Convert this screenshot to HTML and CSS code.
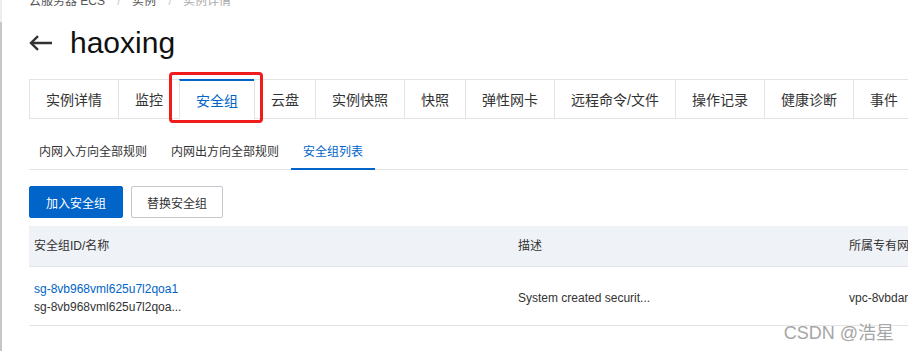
FILE: index.html
```html
<!DOCTYPE html>
<html lang="zh-CN">
<head>
<meta charset="utf-8">
<title>haoxing</title>
<link rel="stylesheet" href="styles.css">
</head>
<body>
<div class="page">
  <div class="rail"></div>
  <main class="main">
    <nav class="crumbs">
      <span class="crumb">云服务器 ECS</span>
      <span class="sep">/</span>
      <span class="crumb">实例</span>
      <span class="sep">/</span>
      <span class="crumb current">实例详情</span>
    </nav>

    <header class="title-row">
      <svg class="back" width="24" height="16" viewBox="0 0 24 16" aria-hidden="true">
        <path d="M2 8 H23 M9 1.2 L2 8 L9 14.8" fill="none" stroke="#333" stroke-width="2.4" stroke-linecap="butt" stroke-linejoin="miter"/>
      </svg>
      <h1 class="title">haoxing</h1>
    </header>

    <div class="tabs">
      <div class="tab">实例详情</div>
      <div class="tab">监控</div>
      <div class="tab active">安全组</div>
      <div class="tab">云盘</div>
      <div class="tab">实例快照</div>
      <div class="tab">快照</div>
      <div class="tab">弹性网卡</div>
      <div class="tab">远程命令/文件</div>
      <div class="tab">操作记录</div>
      <div class="tab">健康诊断</div>
      <div class="tab">事件</div>
      <div class="tab">标签</div>
      <div class="highlight"></div>
    </div>

    <div class="subtabs">
      <div class="subtab first">内网入方向全部规则</div>
      <div class="subtab">内网出方向全部规则</div>
      <div class="subtab active">安全组列表</div>
    </div>

    <div class="actions">
      <button class="btn primary">加入安全组</button>
      <button class="btn">替换安全组</button>
    </div>

    <div class="table">
      <div class="thead">
        <div class="cell">安全组ID/名称</div>
        <div class="cell">描述</div>
        <div class="cell">所属专有网络</div>
      </div>
      <div class="trow">
        <div class="cell stack">
          <a class="link">sg-8vb968vml625u7l2qoa1</a>
          <span>sg-8vb968vml625u7l2qoa...</span>
        </div>
        <div class="cell">System created securit...</div>
        <div class="cell">vpc-8vbdamhk2dz9k1w0n</div>
      </div>
    </div>
  </main>
</div>
<div class="watermark">CSDN @浩星</div>
</body>
</html>
```

FILE: styles.css
```css
html, body {
  margin: 0;
  padding: 0;
  overflow: hidden;
  background: #fff;
}

body {
  font-family: "Liberation Sans", "Noto Sans CJK SC", sans-serif;
  color: #333;
  width: 908px;
  height: 351px;
  position: relative;
}

.page {
  display: flex;
  height: 351px;
}

.rail {
  flex: 0 0 2px;
  background: linear-gradient(to bottom, #ededed 0, #ededed 22px, #c6c6c6 22px, #c6c6c6 100%);
}

.main {
  flex: 1 1 auto;
  min-width: 0;
  padding-left: 27px;
}

/* breadcrumb */
.crumbs {
  margin-top: -8px;
  height: 18px;
  line-height: 18px;
  font-size: 12px;
  white-space: nowrap;
  color: #555;
}
.sep {
  color: #c8c8c8;
  margin: 0 8px 0 9px;
}
.crumb.current {
  color: #aaa;
}

/* title */
.title-row {
  margin-top: 12px;
  height: 40px;
  display: flex;
  align-items: center;
  gap: 17px;
}
.back {
  display: block;
  margin-top: 1px;
}
.title {
  margin: 0;
  font-size: 30px;
  font-weight: normal;
  line-height: 40px;
  color: #111;
  position: relative;
  top: 1px;
}

/* main tabs */
.tabs {
  margin-top: 17px;
  display: flex;
  position: relative;
  white-space: nowrap;
}
.tab {
  flex: 0 0 auto;
  box-sizing: border-box;
  height: 40px;
  padding: 0 16px;
  display: flex;
  align-items: center;
  font-size: 14px;
  border: 1px solid #e3e3e3;
  border-right: none;
  color: #333;
}
.tab.active {
  color: #0064c8;
  border-top: 2px solid #0064c8;
  border-bottom-color: #fff;
  padding-top: 0;
}
.highlight {
  position: absolute;
  left: 140px;
  top: -7px;
  width: 94px;
  height: 51px;
  box-sizing: border-box;
  border: 3px solid #f01c1c;
  border-radius: 4px;
}

/* sub tabs */
.subtabs {
  margin-top: 16px;
  display: flex;
  border-bottom: 1px solid #e3e3e3;
}
.subtab {
  height: 34px;
  line-height: 34px;
  padding: 0 12px;
  font-size: 12px;
  color: #333;
  position: relative;
  white-space: nowrap;
}
.subtab.first {
  padding-left: 10px;
}
.subtab.active {
  color: #0064c8;
}
.subtab.active::after {
  content: "";
  position: absolute;
  left: 0;
  right: 0;
  bottom: -1px;
  height: 2px;
  background: #0064c8;
}

/* buttons */
.actions {
  margin-top: 16px;
  display: flex;
  gap: 8px;
}
.btn {
  box-sizing: border-box;
  height: 32px;
  padding: 0 15px;
  font-family: inherit;
  font-size: 12px;
  border-radius: 2px;
  border: 1px solid #c4c6cc;
  background: #fff;
  color: #333;
}
.btn.primary {
  background: #0064c8;
  border-color: #0064c8;
  color: #fff;
  padding: 0 16px;
}

/* table */
.table {
  margin-top: 8px;
  width: 1100px;
  font-size: 12px;
}
.thead, .trow {
  display: grid;
  grid-template-columns: 484px 331px 285px;
  border-bottom: 1px solid #e3e3e3;
}
.thead {
  background: #eff2f6;
  height: 40px;
  align-items: center;
  color: #333;
}
.trow {
  box-sizing: border-box;
  height: 59px;
  padding: 13px 0 9px;
  align-items: center;
}
.cell {
  padding-left: 5px;
  white-space: nowrap;
  line-height: 18px;
}
.stack {
  display: flex;
  flex-direction: column;
}
.link {
  color: #0064c8;
  text-decoration: none;
}

/* watermark */
.watermark {
  position: absolute;
  right: 14px;
  top: 321px;
  font-size: 18px;
  line-height: 24px;
  color: #a6a6a6;
  text-shadow: 0 0 2px #fff, 0 0 2px #fff;
  white-space: nowrap;
}
```
